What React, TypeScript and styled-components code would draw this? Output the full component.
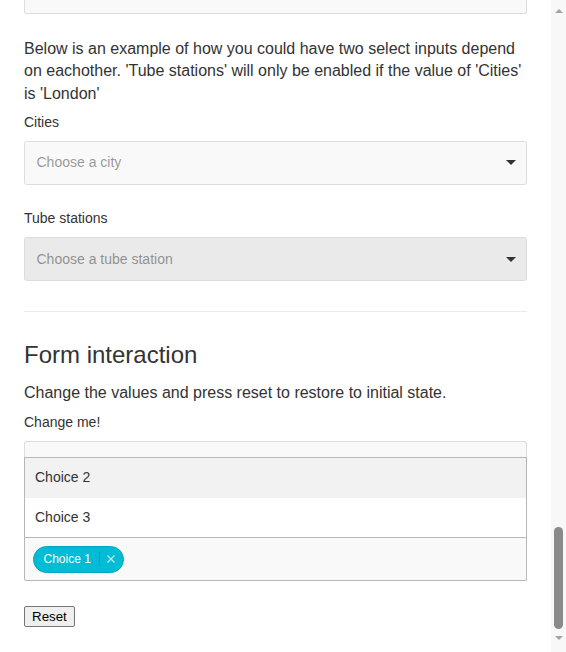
import React from "react";
import styled, { createGlobalStyle } from "styled-components";

const GlobalStyle = createGlobalStyle`
  *, *::before, *::after { box-sizing: border-box; }
  html, body { margin: 0; padding: 0; height: 100%; overflow: hidden; background: #fff; }
  body {
    font-family: "Liberation Sans", Arial, Helvetica, sans-serif;
    font-size: 16px;
    line-height: 1.4;
    color: #333;
  }
`;

const Window = styled.div`
  display: flex;
  width: 566px;
  height: 652px;
`;

const Page = styled.main`
  flex: 1;
  min-width: 0;
  padding: 0 24px;
  overflow: hidden;
`;

const ScrollTrack = styled.div`
  flex: none;
  width: 15px;
  display: flex;
  flex-direction: column;
  align-items: center;
  padding: 9px 0 12px;
  background: #f8f8f8;
`;

const ArrowUp = styled.span`
  width: 0;
  height: 0;
  border-left: 4px solid transparent;
  border-right: 4px solid transparent;
  border-bottom: 4px solid #a3a3a3;
`;

const ArrowDown = styled.span`
  width: 0;
  height: 0;
  border-left: 4px solid transparent;
  border-right: 4px solid transparent;
  border-top: 4px solid #a3a3a3;
`;

const TrackSpace = styled.div`
  flex: 1;
`;

const Thumb = styled.div`
  width: 9px;
  height: 102px;
  margin-bottom: 7px;
  border-radius: 5px;
  background: #8a8a8a;
`;

const TopBox = styled.div`
  height: 14px;
  margin-bottom: 24px;
  background: #f9f9f9;
  border: 1px solid #ddd;
  border-top: none;
  border-radius: 0 0 2.5px 2.5px;
`;

const Text = styled.p<{ $mb: number }>`
  margin: 0 0 ${(p) => p.$mb}px;
  font-size: 16px;
  line-height: 22.4px;
`;

const Label = styled.label<{ $mb?: number }>`
  display: block;
  margin-bottom: ${(p) => p.$mb ?? 9}px;
  font-size: 14px;
  line-height: 19.6px;
`;

const Select = styled.div<{ $disabled?: boolean }>`
  display: flex;
  align-items: center;
  height: 44px;
  margin-bottom: 24px;
  padding: 0 10.5px 0 11.5px;
  background: ${(p) => (p.$disabled ? "#eaeaea" : "#f9f9f9")};
  border: 1px solid #ddd;
  border-radius: 2.5px;
  font-size: 14px;
  line-height: 19.6px;
`;

const Placeholder = styled.span`
  flex: 1;
  color: rgba(51, 51, 51, 0.5);
`;

const Caret = styled.span`
  width: 0;
  height: 0;
  border-style: solid;
  border-width: 5px 5px 0;
  border-color: #333 transparent transparent;
`;

const Divider = styled.hr`
  margin: 30px 0 29px;
  height: 0;
  border: 0;
  border-bottom: 1px solid #eaeaea;
`;

const Heading = styled.h2`
  margin: 0 0 12px;
  font-size: 24px;
  font-weight: 400;
  line-height: 28.8px;
`;

const MultiSelect = styled.div`
  margin-bottom: 25px;
  font-size: 14px;
  line-height: 19.6px;
`;

const MultiTop = styled.div`
  height: 16px;
  background: #f9f9f9;
  border: 1px solid #ddd;
  border-bottom: none;
  border-radius: 2.5px 2.5px 0 0;
`;

const Dropdown = styled.div`
  background: #fff;
  border: 1px solid #b7b7b7;
`;

const Option = styled.div<{ $highlighted?: boolean }>`
  padding: 10px;
  background: ${(p) => (p.$highlighted ? "#f2f2f2" : "#fff")};
  color: #333;
`;

const MultiInner = styled.div`
  padding: 7.5px 7.5px 3.75px;
  background: #f9f9f9;
  border: 1px solid #b7b7b7;
  border-top: none;
  border-radius: 0 0 2.5px 2.5px;
`;

const ChipList = styled.div`
  display: flex;
  flex-wrap: wrap;
`;

const Chip = styled.span`
  display: inline-flex;
  align-items: center;
  margin: 0 3.75px 3.75px 0;
  padding: 4px 10px;
  border-radius: 20px;
  background: #00bcd4;
  border: 1px solid #00a5bb;
  color: #fff;
  font-size: 12px;
  line-height: 16.8px;
`;

const RemoveButton = styled.button`
  display: inline-flex;
  align-items: center;
  width: 18px;
  height: 14px;
  margin: 0 -4px 0 8px;
  padding: 0 0 0 7px;
  border: 0;
  border-left: 1px solid #008fa1;
  background: transparent;
  opacity: 0.75;
  cursor: pointer;
`;

const ResetButton = styled.button`
  display: block;
  padding: 2px 7px;
  background: #efefef;
  border: 1px solid #767676;
  border-radius: 2px;
  color: #000;
  font-family: "Liberation Sans", Arial, sans-serif;
  font-size: 13.333px;
  line-height: 15.3px;
`;

function Cross() {
  return (
    <svg width="8" height="8" viewBox="0 0 8 8" aria-hidden="true">
      <path d="M0.5 0.5 L7.5 7.5 M7.5 0.5 L0.5 7.5" stroke="#fff" strokeWidth="1.3" fill="none" />
    </svg>
  );
}

export default function App() {
  return (
    <>
      <GlobalStyle />
      <Window>
        <Page>
          <TopBox />
          <Text $mb={8}>
            Below is an example of how you could have two select inputs depend on eachother. 'Tube
            stations' will only be enabled if the value of 'Cities' is 'London'
          </Text>
          <Label $mb={8}>Cities</Label>
          <Select>
            <Placeholder>Choose a city</Placeholder>
            <Caret />
          </Select>
          <Label>Tube stations</Label>
          <Select $disabled>
            <Placeholder>Choose a tube station</Placeholder>
            <Caret />
          </Select>
          <Divider />
          <Heading>Form interaction</Heading>
          <Text $mb={8}>Change the values and press reset to restore to initial state.</Text>
          <Label>Change me!</Label>
          <MultiSelect>
            <MultiTop />
            <Dropdown>
              <Option $highlighted>Choice 2</Option>
              <Option>Choice 3</Option>
            </Dropdown>
            <MultiInner>
              <ChipList>
                <Chip>
                  Choice 1
                  <RemoveButton aria-label="Remove item">
                    <Cross />
                  </RemoveButton>
                </Chip>
              </ChipList>
            </MultiInner>
          </MultiSelect>
          <ResetButton type="button">Reset</ResetButton>
        </Page>
        <ScrollTrack>
          <ArrowUp />
          <TrackSpace />
          <Thumb />
          <ArrowDown />
        </ScrollTrack>
      </Window>
    </>
  );
}
